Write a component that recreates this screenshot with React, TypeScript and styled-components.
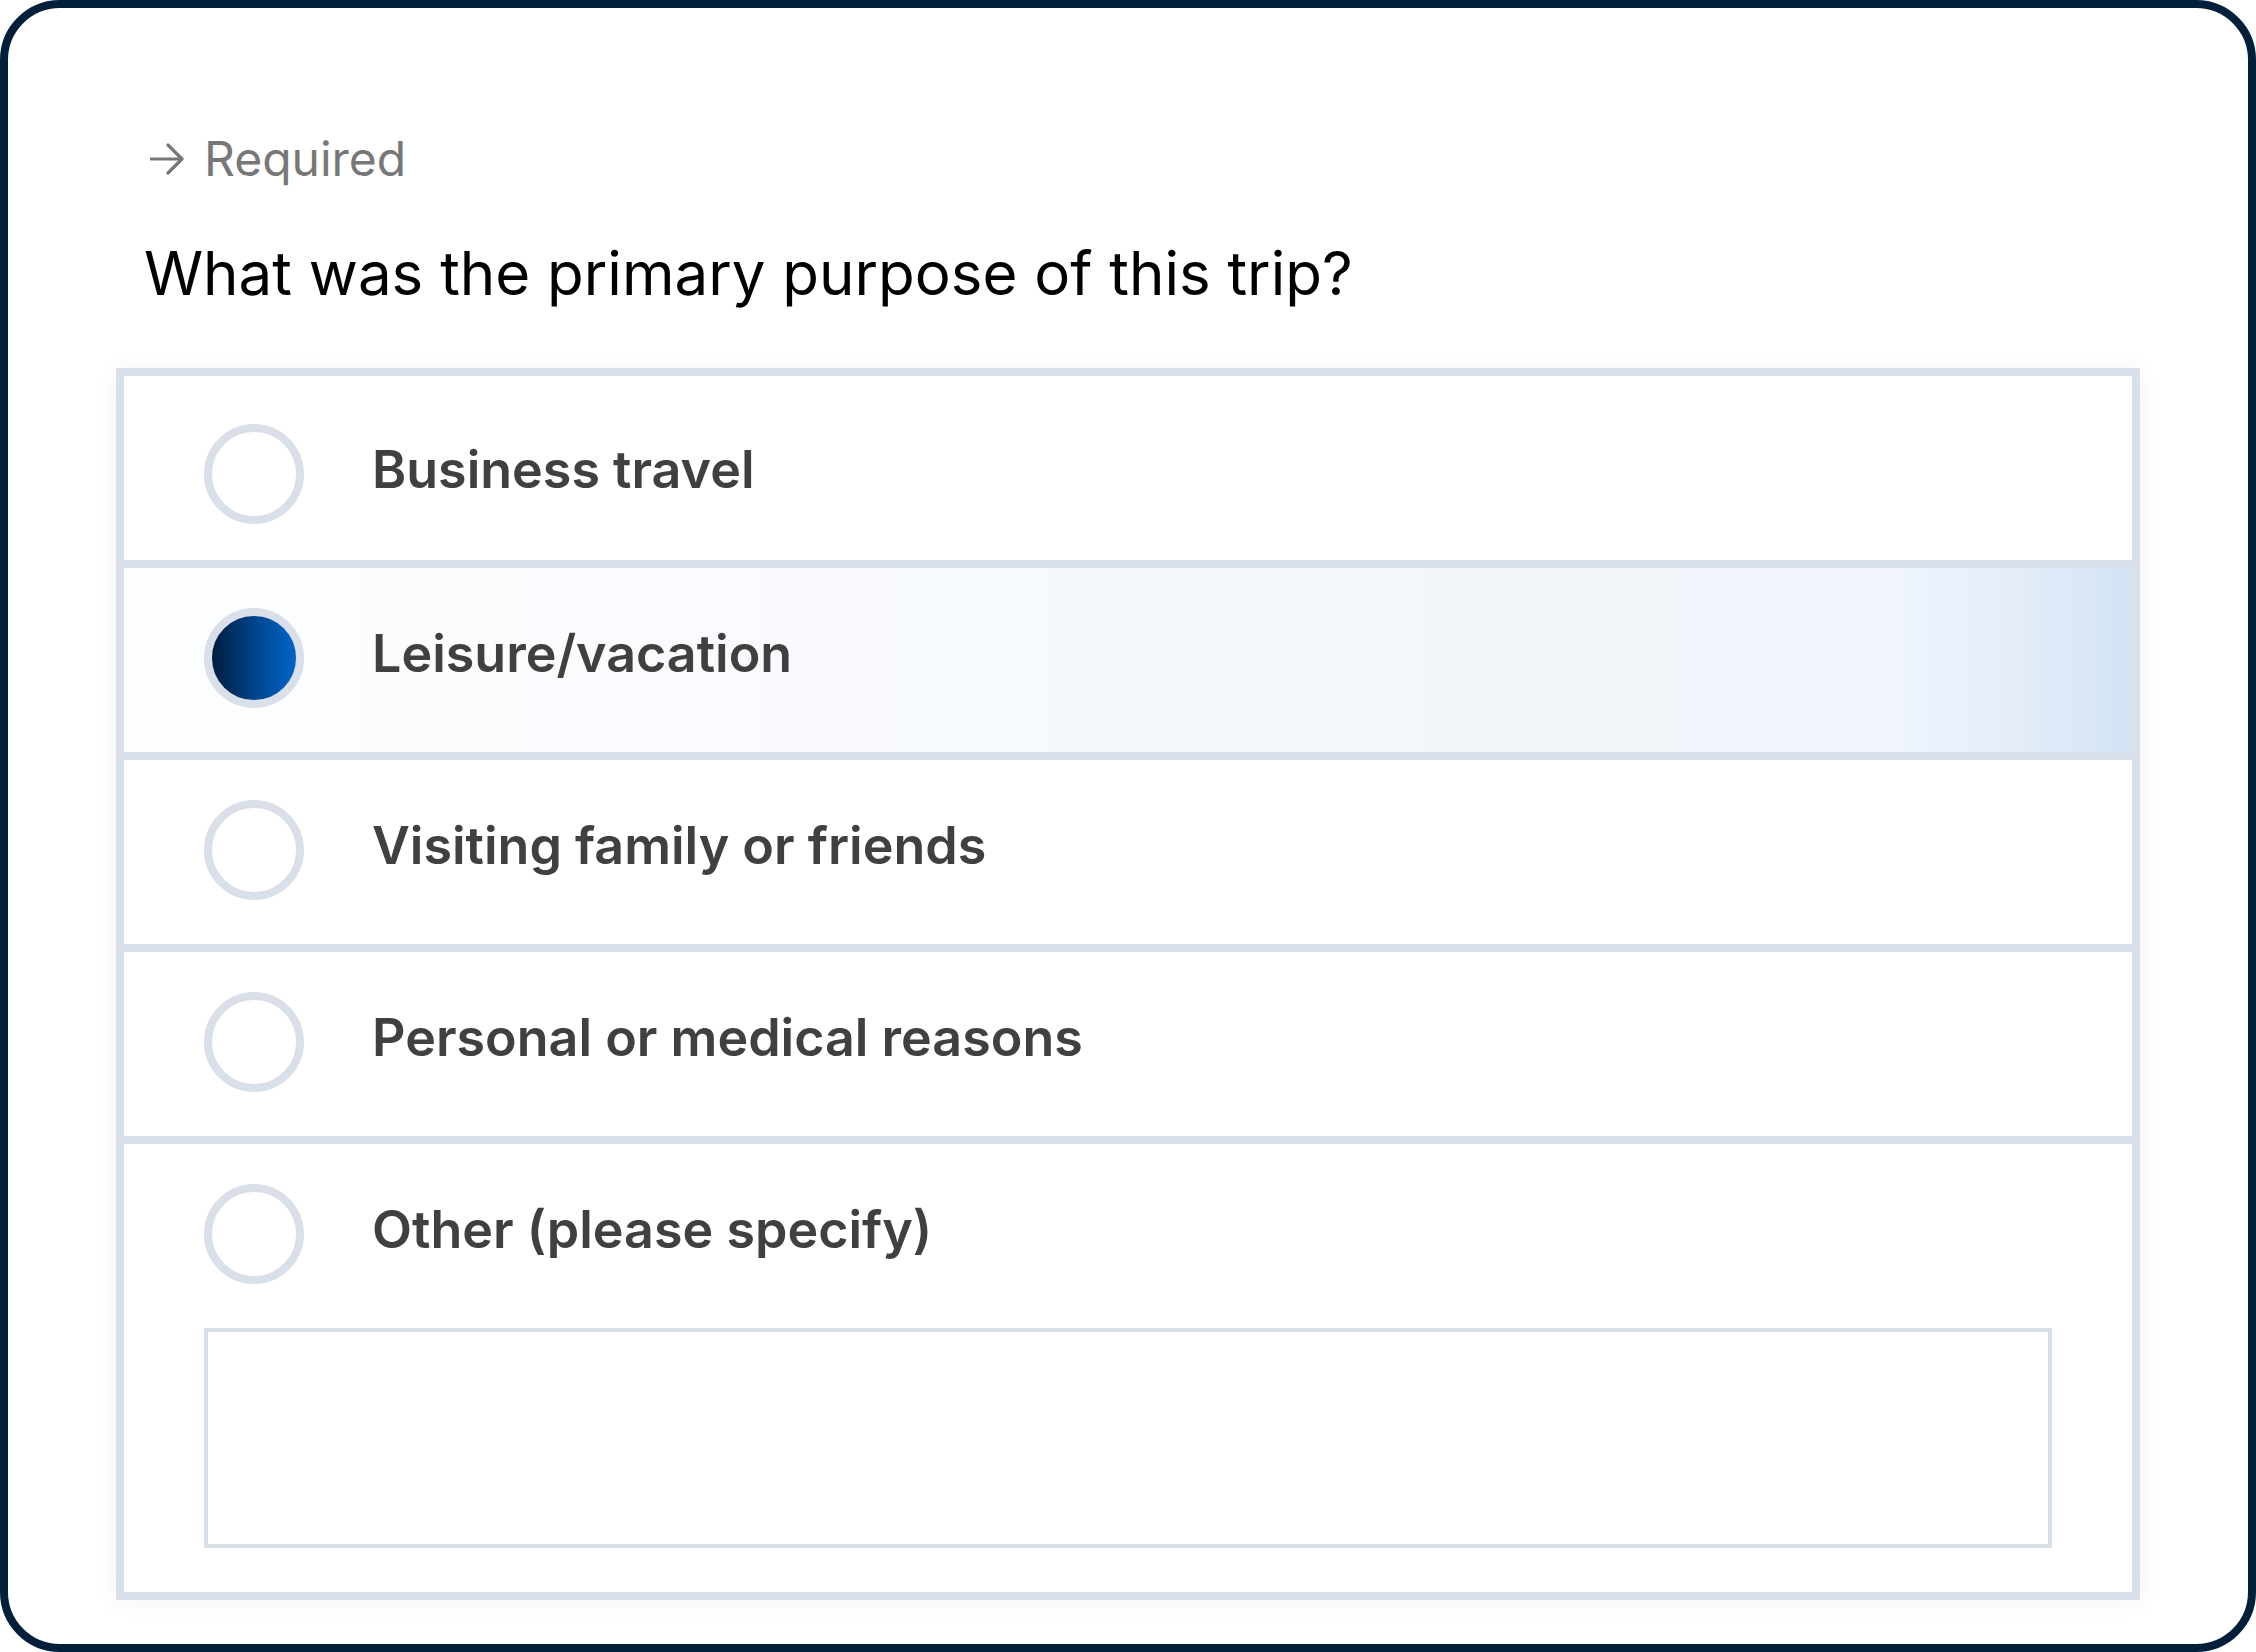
import React, { useState } from "react";
import styled, { createGlobalStyle } from "styled-components";

const GlobalStyle = createGlobalStyle`
    html, body {
        margin: 0;
        padding: 0;
        background: #ffffff;
    }
    * {
        box-sizing: border-box;
    }
`;

const Frame = styled.div`
    width: 2256px;
    height: 1652px;
    border: 8px solid #001f3b;
    border-radius: 60px;
    background: #ffffff;
    padding: 122px 108px 0 108px;
    font-family: Inter, "Noto Sans", sans-serif;
    display: flex;
    flex-direction: column;
    overflow: hidden;
`;

const Header = styled.div`
    padding: 0 28px;
    display: flex;
    flex-direction: column;
    gap: 49px;
    margin-bottom: 59px;
`;

const RequiredRow = styled.div`
    display: flex;
    align-items: center;
    gap: 20px;
    height: 58px;
    color: #777777;
    font-size: 48px;
    line-height: 58px;
`;

const ArrowIcon = styled.svg`
    width: 34px;
    height: 32px;
    margin-left: 6px;
    flex-shrink: 0;
`;

const Question = styled.h1`
    margin: 0;
    font-size: 60px;
    line-height: 72px;
    font-weight: 400;
    color: #000000;
`;

const OptionCard = styled.div`
    border: 8px solid #d9e0ea;
    background: #ffffff;
    box-shadow: 0 2px 22px rgba(20, 30, 50, 0.05);
    display: flex;
    flex-direction: column;
`;

const OptionRow = styled.div<{ $selected?: boolean; $first?: boolean }>`
    display: flex;
    flex-direction: column;
    gap: 44px;
    padding: ${(p) => (p.$first ? "48px 80px 36px" : "40px 80px 44px")};
    border-top: ${(p) => (p.$first ? "none" : "8px solid #d9e0ea")};
    background: ${(p) =>
        p.$selected
            ? "linear-gradient(90deg, #fdfeff 0%, #f8fafd 35%, #f2f6fa 70%, #f0f5fd 88%, #e4edf9 94%, #d3e3f4 100%)"
            : "#ffffff"};
    cursor: pointer;
`;

const OptionLine = styled.div`
    display: flex;
    align-items: center;
    gap: 68px;
`;

const Radio = styled.span<{ $checked?: boolean }>`
    width: 100px;
    height: 100px;
    border-radius: 50%;
    border: 8px solid #d9e0ea;
    flex-shrink: 0;
    background: ${(p) =>
        p.$checked ? "linear-gradient(90deg, #001c3e 0%, #00448a 50%, #0064c8 100%)" : "#ffffff"};
`;

const Label = styled.span`
    font-size: 52px;
    line-height: 64px;
    font-weight: 600;
    color: #404040;
    margin-bottom: 9px;
`;

const OtherInput = styled.textarea`
    display: block;
    width: 100%;
    height: 220px;
    margin: 0;
    border: 4px solid #d9e0ea;
    border-radius: 0;
    background: #ffffff;
    resize: none;
    outline: none;
    font-family: Inter, sans-serif;
    font-size: 40px;
    padding: 16px 20px;
`;

const options = [
    "Business travel",
    "Leisure/vacation",
    "Visiting family or friends",
    "Personal or medical reasons",
    "Other (please specify)"
];

function App() {
    const [selected, setSelected] = useState<number>(1);
    const [other, setOther] = useState<string>("");

    return (
        <Frame>
            <GlobalStyle />
            <Header>
                <RequiredRow>
                    <ArrowIcon viewBox="0 0 34 32" fill="none">
                        <path
                            d="M1 16H32M18 2L32 16L18 30"
                            stroke="#777777"
                            strokeWidth="3.2"
                            strokeLinecap="round"
                            strokeLinejoin="round"
                        />
                    </ArrowIcon>
                    <span>Required</span>
                </RequiredRow>
                <Question>What was the primary purpose of this trip?</Question>
            </Header>
            <OptionCard>
                {options.map((opt, i) => (
                    <OptionRow
                        key={opt}
                        $first={i === 0}
                        $selected={selected === i}
                        onClick={() => setSelected(i)}
                    >
                        <OptionLine>
                            <Radio $checked={selected === i} />
                            <Label>{opt}</Label>
                        </OptionLine>
                        {i === options.length - 1 && (
                            <OtherInput
                                value={other}
                                onChange={(e) => setOther(e.target.value)}
                                onClick={(e) => e.stopPropagation()}
                            />
                        )}
                    </OptionRow>
                ))}
            </OptionCard>
        </Frame>
    );
}

export default App;
